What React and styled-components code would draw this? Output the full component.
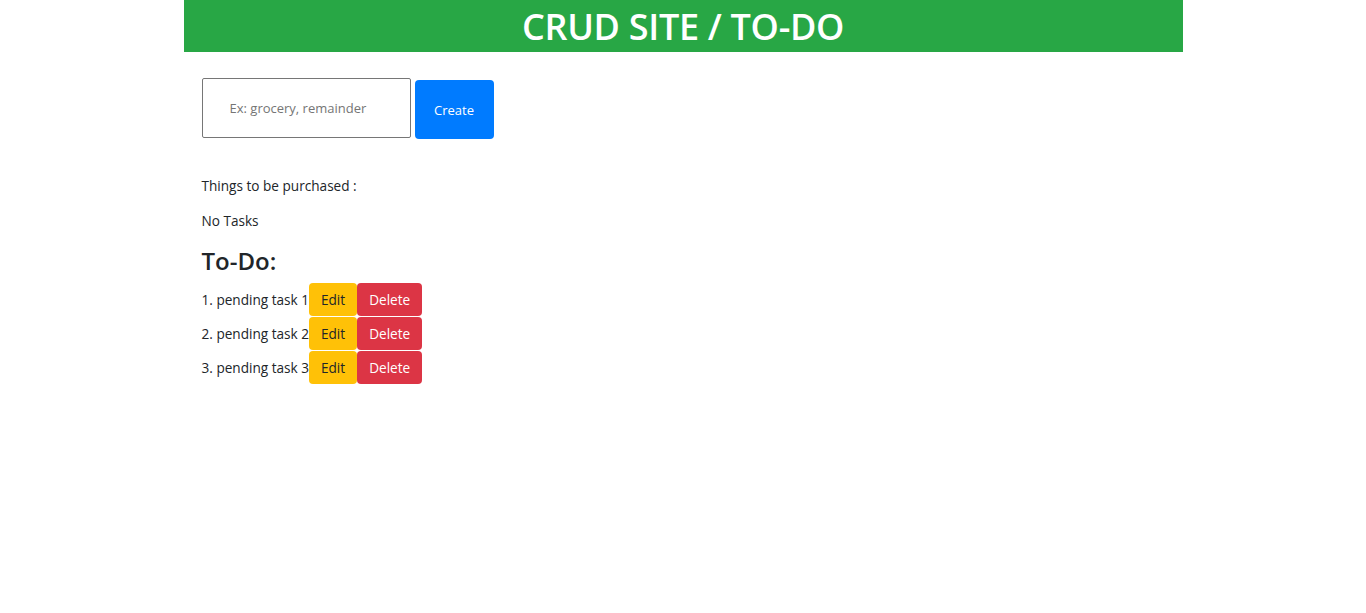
import React, { useState } from "react";
import styled, { createGlobalStyle } from "styled-components";

const GlobalStyle = createGlobalStyle`
  body {
    margin: 0;
    background: #fff;
    font-family: "Open Sans", "Noto Sans", sans-serif;
    color: #212529;
  }
`;

const Page = styled.div`
  width: 999px;
  margin: 0 auto;
`;

const Header = styled.header`
  height: 52px;
  background-color: #28a745;
  display: flex;
  justify-content: center;
  align-items: center;
`;

const Title = styled.h1`
  margin: 0;
  color: white;
  font-size: 36px;
  font-weight: 600;
  letter-spacing: -0.3px;
`;

const Main = styled.main`
  padding: 26px 18px 0;
  font-size: 13.6px;
`;

const Form = styled.form`
  display: flex;
  align-items: flex-start;
  gap: 4px;
`;

const Input = styled.input`
  box-sizing: border-box;
  width: 209px;
  height: 60px;
  border: 1px solid #767676;
  border-radius: 2px;
  padding: 0 27px;
  font-family: inherit;
  font-size: 13px;
  &::placeholder {
    color: #757575;
  }
`;

const Button = styled.button`
  border: none;
  border-radius: 4px;
  font-family: inherit;
  font-size: 13.6px;
  color: ${(p) => (p.$variant === "edit" ? "#212529" : "white")};
  background-color: ${(p) =>
    p.$variant === "edit" ? "#ffc107" : p.$variant === "delete" ? "#dc3545" : "#007bff"};
  cursor: pointer;
`;

const CreateButton = styled(Button)`
  width: 79px;
  height: 59px;
  margin-top: 2px;
  font-size: 13px;
`;

const Text = styled.p`
  margin: 0;
  line-height: 18px;
`;

const Label = styled(Text)`
  margin-top: 38px;
`;

const Empty = styled(Text)`
  margin-top: 17px;
`;

const Heading = styled.h2`
  margin: 16px 0 7px;
  font-size: 24px;
  font-weight: 600;
  line-height: 30px;
`;

const List = styled.ol`
  list-style: none;
  margin: 0;
  padding: 0;
`;

const Row = styled.li`
  display: flex;
  align-items: center;
  height: 33.7px;
`;

const RowButton = styled(Button)`
  height: 33px;
  padding: 0 12px;
`;

export default function App() {
  const [tasks] = useState(["pending task 1", "pending task 2", "pending task 3"]);
  return (
    <>
      <GlobalStyle />
      <Page>
        <Header>
          <Title>CRUD SITE / TO-DO</Title>
        </Header>
        <Main>
          <Form onSubmit={(e) => e.preventDefault()}>
            <Input placeholder="Ex: grocery, remainder" />
            <CreateButton type="submit">Create</CreateButton>
          </Form>
          <Label>Things to be purchased :</Label>
          <Empty>No Tasks</Empty>
          <Heading>To-Do:</Heading>
          <List>
            {tasks.map((t, i) => (
              <Row key={i}>
                {i + 1}. {t}
                <RowButton $variant="edit">Edit</RowButton>
                <RowButton $variant="delete">Delete</RowButton>
              </Row>
            ))}
          </List>
        </Main>
      </Page>
    </>
  );
}
